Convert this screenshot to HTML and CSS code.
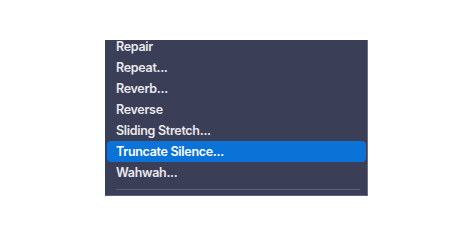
FILE: index.html
```html
<!DOCTYPE html>
<html lang="en">
<head>
    <meta charset="UTF-8">
    <meta name="viewport" content="width=device-width, initial-scale=1.0">
    <link rel="stylesheet" href="styles.css">
</head>
<body>
    <div class="stage">
        <!-- Effect menu (scrolled, top item partly hidden) -->
        <div class="menu">
            <ul class="menu-list">
                <li class="menu-item">Repair</li>
                <li class="menu-item">Repeat...</li>
                <li class="menu-item">Reverb...</li>
                <li class="menu-item">Reverse</li>
                <li class="menu-item">Sliding Stretch...</li>
                <li class="menu-item active">Truncate Silence...</li>
                <li class="menu-item">Wahwah...</li>
            </ul>
            <div class="menu-sep"></div>
        </div>
    </div>
</body>
</html>
```
FILE: styles.css
```css
html, body {
    margin: 0;
    background: #ffffff;
}

.stage {
    padding: 40px 0 0 105px;
}

.menu {
    width: 263px;
    height: 156px;
    box-sizing: border-box;
    background: #3b3e57;
    border-right: 1px solid #6b6e82;
    border-bottom: 1px solid #5f6278;
    overflow: hidden;
    font-family: Inter, "Liberation Sans", sans-serif;
    font-size: 12.5px;
    font-weight: 600;
    letter-spacing: -0.3px;
    color: #e9e9ef;
}

.menu-list {
    list-style: none;
    margin: -4px 0 0 0;
    padding: 0 1px 0 2px;
}

.menu-item {
    height: 21px;
    line-height: 21px;
    padding-left: 9px;
    border-radius: 4px;
    white-space: nowrap;
}

.menu-item.active {
    background: #0b72d8;
    color: #ffffff;
}

.menu-sep {
    height: 1px;
    margin: 6px 7px 0 11px;
    background: #5d6079;
}
```
